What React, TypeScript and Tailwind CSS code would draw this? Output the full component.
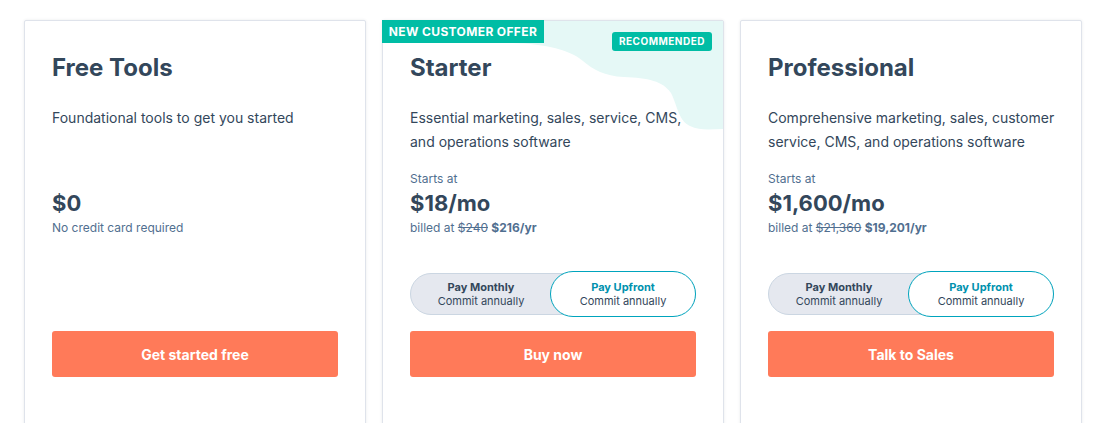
import React from "react";

const font = { fontFamily: "Inter, 'Open Sans', sans-serif" };

function Toggle() {
  return (
    <div className="relative h-[46px] w-full">
      <div className="absolute left-0 right-0 top-[2px] h-[42px] rounded-full border border-[#cbd6e2] bg-[#e5e8ef]" />
      <div className="absolute left-0 top-[2px] flex h-[42px] w-[142px] flex-col items-center justify-center text-[11px] leading-[14px] text-[#33475b]">
        <span className="font-bold">Pay Monthly</span>
        <span>Commit annually</span>
      </div>
      <div className="absolute right-0 top-0 flex h-[46px] w-[146px] flex-col items-center justify-center rounded-full border-[1.5px] border-[#00a4bd] bg-white text-[11px] leading-[14px] text-[#33475b]">
        <span className="font-bold text-[#0091ae]">Pay Upfront</span>
        <span>Commit annually</span>
      </div>
    </div>
  );
}

type CardProps = {
  title: string;
  desc: React.ReactNode;
  startsAt: boolean;
  price: string;
  sub: React.ReactNode;
  toggle: boolean;
  cta: string;
  starter?: boolean;
};

function Card({ title, desc, startsAt, price, sub, toggle, cta, starter }: CardProps) {
  return (
    <div className="relative h-[420px] w-[342px] shrink-0 rounded-[2px] border border-[#dfe3eb] bg-white shadow-[0_0_3px_rgba(45,62,80,0.10)]">
      {starter && (
        <>
          <svg
            className="absolute right-0 top-0"
            width="341"
            height="110"
            viewBox="0 0 341 110"
          >
            <path
              d="M130,0 L341,0 L341,108 C330,108 318,110 308,105 C296,99 296,86 289,72 C281,60 266,57 242,56 C222,55 212,49 201,40 C188,29 165,23 130,22 Z"
              fill="#e5f8f6"
            />
          </svg>
          <div className="absolute left-[-1px] top-[-1px] flex h-[23px] w-[162px] items-center justify-center bg-[#00bda5] text-[12px] font-bold tracking-[0.03em] text-white">
            NEW CUSTOMER OFFER
          </div>
          <div className="absolute right-[11px] top-[11px] flex h-[19px] items-center rounded-[3px] bg-[#00bda5] px-[7px] text-[10px] font-bold tracking-[0.05em] text-white">
            RECOMMENDED
          </div>
        </>
      )}
      <div className="relative flex flex-col px-[27px] pt-[31px]">
        <h2 className="text-[24px] font-bold leading-[32px] text-[#33475b]">{title}</h2>
        <p className="mt-[22px] h-[48px] whitespace-nowrap text-[14px] leading-[24px] text-[#33475b]">{desc}</p>
        <div className="mt-[16px] h-[18px] text-[12px] leading-[18px] text-[#516f90]">
          {startsAt ? "Starts at" : ""}
        </div>
        <div className="mt-[1px] text-[22px] font-bold leading-[28px] text-[#33475b]">{price}</div>
        <div className="mt-[2px] text-[12px] leading-[18px] text-[#516f90]">{sub}</div>
        <div className="mt-[34px] h-[46px]">{toggle && <Toggle />}</div>
        <button className="mt-[14px] flex h-[46px] w-full items-center justify-center rounded-[3px] bg-[#ff7a59] text-[14px] font-bold text-white">
          {cta}
        </button>
      </div>
    </div>
  );
}

export default function App() {
  return (
    <div className="min-h-[423px] w-full overflow-hidden bg-white" style={font}>
      <div className="flex gap-4 pl-6 pt-5">
        <Card
          title="Free Tools"
          desc="Foundational tools to get you started"
          startsAt={false}
          price="$0"
          sub="No credit card required"
          toggle={false}
          cta="Get started free"
        />
        <Card
          starter
          title="Starter"
          desc={
            <>
              Essential marketing, sales, service, CMS,
              <br />
              and operations software
            </>
          }
          startsAt
          price="$18/mo"
          sub={
            <>
              billed at <span className="line-through">$240</span>{" "}
              <span className="font-bold">$216/yr</span>
            </>
          }
          toggle
          cta="Buy now"
        />
        <Card
          title="Professional"
          desc={
            <>
              Comprehensive marketing, sales, customer
              <br />
              service, CMS, and operations software
            </>
          }
          startsAt
          price="$1,600/mo"
          sub={
            <>
              billed at <span className="line-through">$21,360</span>{" "}
              <span className="font-bold">$19,201/yr</span>
            </>
          }
          toggle
          cta="Talk to Sales"
        />
      </div>
    </div>
  );
}
